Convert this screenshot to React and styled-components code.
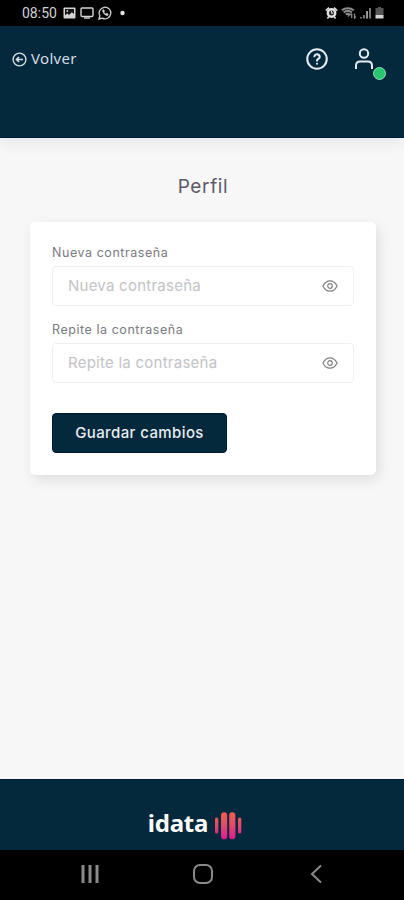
import { useState } from 'react';
import styled, { createGlobalStyle } from 'styled-components';

const GlobalStyle = createGlobalStyle`
  * {
    box-sizing: border-box;
  }
  body {
    margin: 0;
    background-color: #f7f7f7;
    font-family: Inter, "Liberation Sans", sans-serif;
  }
  svg {
    display: block;
  }
`;

const Screen = styled.div`
  display: flex;
  flex-direction: column;
  height: 900px;
  overflow: hidden;
  background-color: #f7f7f7;
`;

const StatusBar = styled.div`
  display: flex;
  justify-content: space-between;
  flex: none;
  height: 26px;
  padding: 0 20px 0 22px;
  background-color: #000;
  color: #d4d4d4;
`;

const StatusGroup = styled.div`
  display: flex;
  align-items: center;
  gap: ${({ $gap }) => $gap}px;
`;

const Clock = styled.span`
  width: 36px;
  margin-right: 1px;
  font: 400 14px/26px Roboto, sans-serif;
  white-space: nowrap;
`;

const Header = styled.header`
  display: flex;
  justify-content: space-between;
  align-items: flex-start;
  flex: none;
  height: 112px;
  padding: 20px 27px 0 12px;
  border-bottom: 1px solid #001b31;
  background-color: #04283c;
  box-shadow: 0 6px 14px rgba(0, 0, 0, 0.06);
  color: #e4edf1;
`;

const BackButton = styled.button`
  display: flex;
  align-items: center;
  gap: 4px;
  height: 26px;
  padding: 0;
  border: none;
  background: none;
  color: #d3dfe6;
  font: 400 15px/24px "Noto Sans", sans-serif;
  letter-spacing: 0.3px;
`;

const BackText = styled.span`
  margin-top: -2px;
`;

const HeaderActions = styled.div`
  display: flex;
  gap: 21px;
`;

const IconButton = styled.button`
  position: relative;
  padding: 0;
  border: none;
  background: none;
  color: #e4edf1;
`;

const OnlineDot = styled.span`
  position: absolute;
  right: -9px;
  bottom: -8px;
  width: 13px;
  height: 13px;
  border: 1px solid #8fe0b4;
  border-radius: 50%;
  background-color: #28c76f;
`;

const Main = styled.main`
  display: flex;
  flex-direction: column;
  flex: 1;
  padding: 36px 28px 0 30px;
`;

const Title = styled.h1`
  margin: 0 0 22px;
  color: #5d5a67;
  font-size: 19px;
  font-weight: 400;
  line-height: 26px;
  letter-spacing: 0.65px;
  text-align: center;
`;

const Card = styled.form`
  height: 253px;
  padding: 22px;
  border-radius: 5px;
  background-color: #fff;
  box-shadow: 3px 5px 13px rgba(0, 0, 0, 0.1);
`;

const Field = styled.div`
  height: 77px;
`;

const Label = styled.label`
  display: block;
  height: 22px;
  color: #7a7a7f;
  font-size: 12.5px;
  line-height: 18px;
  letter-spacing: 0.55px;
`;

const InputBox = styled.div`
  display: flex;
  align-items: center;
  width: 302px;
  height: 40px;
  padding: 0 15px;
  border: 1px solid #f0f0f1;
  border-radius: 4px;
`;

const Input = styled.input`
  flex: 1;
  min-width: 0;
  padding: 0;
  border: none;
  outline: none;
  background: none;
  color: #5d5a67;
  font: 400 15px/20px Inter, sans-serif;
  letter-spacing: 0.25px;
  &::placeholder {
    color: #c3c3c6;
    opacity: 1;
  }
`;

const EyeButton = styled.button`
  padding: 0;
  border: none;
  background: none;
  color: #808083;
`;

const SaveButton = styled.button`
  display: block;
  width: 175px;
  height: 40px;
  margin-top: 15px;
  padding: 0;
  border: 1px solid #001b31;
  border-radius: 4px;
  background-color: #04283c;
  color: #e8eef1;
  font: 500 15px/20px Inter, sans-serif;
  letter-spacing: 0.4px;
`;

const Footer = styled.footer`
  display: flex;
  justify-content: center;
  flex: none;
  gap: 6px;
  height: 71px;
  padding: 32px 14px 0 0;
  border-top: 1px solid #001b31;
  background-color: #04283c;
`;

const Brand = styled.span`
  margin-top: -3px;
  color: #fff;
  font: 700 24px/28px "Noto Sans", sans-serif;
  letter-spacing: -0.2px;
`;

const NavBar = styled.nav`
  display: flex;
  justify-content: space-between;
  align-items: center;
  flex: none;
  height: 50px;
  padding: 0 78px 2px 80px;
  background-color: #000;
  color: #8a8a8a;
`;

const PictureIcon = () => (
  <svg width="13" height="12" viewBox="0 0 13 12">
    <rect x="0.5" y="0.5" width="12" height="11" rx="1" fill="#d4d4d4" />
    <path d="M2 2h9v5L8.8 5.2 6 8 4.4 6.5 2 8.3z" fill="#151515" />
    <circle cx="4.3" cy="4" r="0.9" fill="#d4d4d4" />
  </svg>
);

const CastIcon = () => (
  <svg width="14" height="12" viewBox="0 0 14 12" fill="none" stroke="currentColor" strokeWidth="1.4">
    <rect x="1" y="1" width="12" height="8.5" rx="1.2" />
    <path d="M4 11h6" />
  </svg>
);

const WhatsappIcon = () => (
  <svg width="14" height="14" viewBox="0 0 14 14" fill="none" stroke="currentColor">
    <path d="M1 13l.9-3.2a5.8 5.8 0 1 1 2.3 2.3z" strokeWidth="1.3" />
    <path d="M4.8 4c-.4 2.7 2.4 5.6 5 5.4l.3-1.3-1.6-.8-.8.7c-.8-.3-1.6-1-1.9-1.9l.6-.8L5.8 3.8z" strokeWidth="0.8" fill="currentColor" />
  </svg>
);

const DotIcon = () => (
  <svg width="14" height="6" viewBox="0 0 14 6">
    <circle cx="6.5" cy="3" r="2.2" fill="#e4e4e4" />
  </svg>
);

const AlarmIcon = () => (
  <svg width="13" height="12" viewBox="0 0 13 12">
    <path d="M.8 3.6 4 .6M12.2 3.6 9 .6M2.4 11.5l1.4-1.7M10.6 11.5 9.2 9.8" stroke="#d8d8d8" strokeWidth="1.7" />
    <circle cx="6.5" cy="6" r="4.9" fill="#e2e2e2" />
    <circle cx="6.5" cy="6" r="2.5" fill="#252525" />
    <path d="M6.5 4v2.2h1.8" stroke="#eee" fill="none" />
  </svg>
);

const WifiIcon = () => (
  <svg width="16" height="12" viewBox="0 0 16 12" fill="none" stroke="#8a8a8a">
    <path d="M.8 3.3c3.5-2.8 8.5-2.8 12 0M2.7 5.4c2.5-1.8 5.8-1.8 8.2 0M4.7 7.5c1.3-.9 2.9-.9 4.2 0" strokeWidth="2" />
    <path d="M6.8 9.5l2-2.2M10.7 11V6.5M9.3 8l1.4-1.5M13.5 6.5V11l1.3-1.5" strokeWidth="1.3" />
  </svg>
);

const SignalIcon = () => (
  <svg width="12" height="12" viewBox="0 0 12 12">
    <path d="M0 10h2v1.5H0zM3 8h2v3.5H3z" fill="#777" />
    <path d="M6 4h2v7.5H6z" fill="#969696" />
    <path d="M9 1h2v10.5H9z" fill="#777" />
  </svg>
);

const BatteryIcon = () => (
  <svg width="9" height="12" viewBox="0 0 9 12">
    <path d="M3 0h3v1h2.5v7h-8V1H3z" fill="#555" />
    <path d="M.5 8h8v3.5h-8z" fill="#d4d4d4" />
  </svg>
);

const BackIcon = () => (
  <svg width="15" height="15" viewBox="0 0 15 15" fill="none" stroke="currentColor" strokeWidth="1.4">
    <circle cx="7.5" cy="7.5" r="6.4" />
    <path d="M11 7.5H4.5M7 5 4.5 7.5 7 10" strokeWidth="1.7" />
  </svg>
);

const HelpIcon = () => (
  <svg width="26" height="26" viewBox="0 0 24 24" fill="none" stroke="currentColor" strokeWidth="1.9" strokeLinecap="round" strokeLinejoin="round">
    <circle cx="12" cy="12" r="9" />
    <path d="M9.6 9.5a2.5 2.5 0 0 1 4.9.7c0 1.7-2.5 1.8-2.5 3.3M12 16.3v.1" />
  </svg>
);

const UserIcon = () => (
  <svg width="26" height="26" viewBox="0 0 26 26" fill="none" stroke="currentColor" strokeWidth="2">
    <circle cx="13" cy="7.5" r="4.2" />
    <path d="M5 23v-3.3c0-2.6 1.8-4.2 4.3-4.2h7.4c2.5 0 4.3 1.6 4.3 4.2V23" />
  </svg>
);

const EyeIcon = () => (
  <svg width="16" height="14" viewBox="0 0 16 14" fill="none" stroke="currentColor" strokeWidth="1.2">
    <path d="M.9 7C2.6 3.7 5 1.8 8 1.8S13.4 3.7 15.1 7C13.4 10.3 11 12.2 8 12.2S2.6 10.3.9 7z" />
    <circle cx="8" cy="7" r="2.3" />
  </svg>
);

const LogoBars = () => (
  <svg width="28" height="28" viewBox="0 0 28 28">
    <defs>
      <linearGradient id="bars" gradientUnits="userSpaceOnUse" x1="0" y1="0" x2="0" y2="27">
        <stop offset="0" stopColor="#f0604f" />
        <stop offset="0.5" stopColor="#e4486b" />
        <stop offset="1" stopColor="#d91b94" />
      </linearGradient>
    </defs>
    <g fill="url(#bars)">
      <rect x="1" y="5.5" width="3.3" height="16" rx="1.6" />
      <rect x="7" y="0.3" width="6.2" height="27" rx="3.1" />
      <rect x="15.2" y="0.3" width="6.2" height="27" rx="3.1" />
      <rect x="24" y="5.5" width="3.3" height="16" rx="1.6" />
    </g>
  </svg>
);

const PasswordField = ({ id, text }) => {
  const [visible, setVisible] = useState(false);

  return (
    <Field>
      <Label htmlFor={id}>{text}</Label>
      <InputBox>
        <Input id={id} type={visible ? 'text' : 'password'} placeholder={text} />
        <EyeButton type="button" aria-label="Mostrar" onClick={() => setVisible(!visible)}>
          <EyeIcon />
        </EyeButton>
      </InputBox>
    </Field>
  );
};

const App = () => {
  return (
    <Screen>
      <GlobalStyle />
      <StatusBar>
        <StatusGroup $gap={4}>
          <Clock>08:50</Clock>
          <PictureIcon />
          <CastIcon />
          <WhatsappIcon />
          <DotIcon />
        </StatusGroup>
        <StatusGroup $gap={3}>
          <AlarmIcon />
          <WifiIcon />
          <SignalIcon />
          <BatteryIcon />
        </StatusGroup>
      </StatusBar>
      <Header>
        <BackButton>
          <BackIcon />
          <BackText>Volver</BackText>
        </BackButton>
        <HeaderActions>
          <IconButton aria-label="Ayuda">
            <HelpIcon />
          </IconButton>
          <IconButton aria-label="Perfil">
            <UserIcon />
            <OnlineDot />
          </IconButton>
        </HeaderActions>
      </Header>
      <Main>
        <Title>Perfil</Title>
        <Card onSubmit={(event) => event.preventDefault()}>
          <PasswordField id="newPassword" text="Nueva contraseña" />
          <PasswordField id="repeatPassword" text="Repite la contraseña" />
          <SaveButton type="submit">Guardar cambios</SaveButton>
        </Card>
      </Main>
      <Footer>
        <Brand>idata</Brand>
        <LogoBars />
      </Footer>
      <NavBar>
        <svg width="20" height="20" viewBox="0 0 20 20" stroke="currentColor" strokeWidth="3">
          <path d="M3 1v18M10 1v18M17 1v18" />
        </svg>
        <svg width="22" height="22" viewBox="0 0 22 22" fill="none" stroke="currentColor" strokeWidth="2">
          <rect x="2" y="2" width="18" height="18" rx="6" />
        </svg>
        <svg width="20" height="20" viewBox="0 0 20 20" fill="none" stroke="currentColor" strokeWidth="2">
          <path d="M15 1.5 6 10l9 8.5" />
        </svg>
      </NavBar>
    </Screen>
  );
};

export default App;
